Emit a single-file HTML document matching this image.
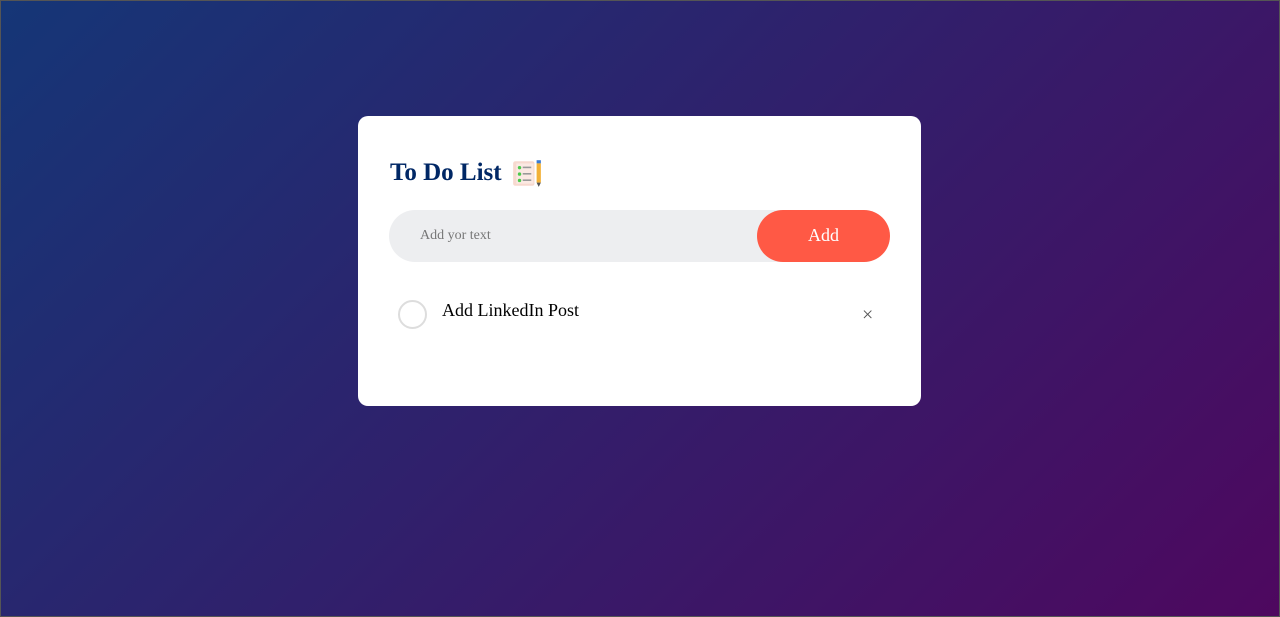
<!DOCTYPE html>
<html><head><style>
*{margin:0;padding:0;box-sizing:border-box}
html,body{width:1280px;height:617px;overflow:hidden}
body{background:linear-gradient(135deg,#153677,#4e085f);font-family:"Liberation Serif",serif;position:relative;box-shadow:inset 0 0 0 1px #555}
.card{position:absolute;left:358px;top:116px;width:563px;height:290px;background:#fff;border-radius:10px}
h2{position:absolute;left:32px;top:42px;color:#002765;font-size:25px;font-weight:bold;display:flex;align-items:center}
.ic{margin-left:9px;width:32px;height:30px;position:relative}
.row{position:absolute;left:31px;top:94px;width:501px;height:52px;background:#edeef0;border-radius:26px}
.row span{position:absolute;left:31px;top:18px;font-size:14px;color:#777}
.btn{position:absolute;right:0;top:0;width:133px;height:52px;background:#ff5945;border-radius:26px;color:#fff;font-size:18px;text-align:center;line-height:51px}
.circ{position:absolute;left:40px;top:184px;width:29px;height:29px;border:2px solid #ddd;border-radius:50%}
.txt{position:absolute;left:84px;top:184px;font-size:18px;color:#000}
.x{position:absolute;left:504px;top:188px;font-size:20px;color:#555}
</style></head><body>
<div class="card">
<h2>To Do List <span class="ic"><svg width="32" height="30" viewBox="0 0 30 28"><rect x="2" y="3" width="20" height="23" rx="2" fill="#f7d9cf"/><rect x="5" y="5" width="16" height="19" fill="#fbe9e3"/><circle cx="8" cy="9" r="1.6" fill="#4cc94c"/><circle cx="8" cy="15" r="1.6" fill="#4cc94c"/><circle cx="8" cy="21" r="1.6" fill="#4cc94c"/><rect x="11" y="8" width="8" height="1.5" fill="#999"/><rect x="11" y="14" width="8" height="1.5" fill="#999"/><rect x="11" y="20" width="8" height="1.5" fill="#999"/><rect x="24" y="2" width="4" height="3" fill="#3a7bd5"/><rect x="24" y="5" width="4" height="18" fill="#f2b138"/><polygon points="24,23 28,23 26,27" fill="#555"/></svg></span></h2>
<div class="row"><span>Add yor text</span><div class="btn">Add</div></div>
<div class="circ"></div>
<div class="txt">Add LinkedIn Post</div>
<div class="x">×</div>
</div>
</body></html>
